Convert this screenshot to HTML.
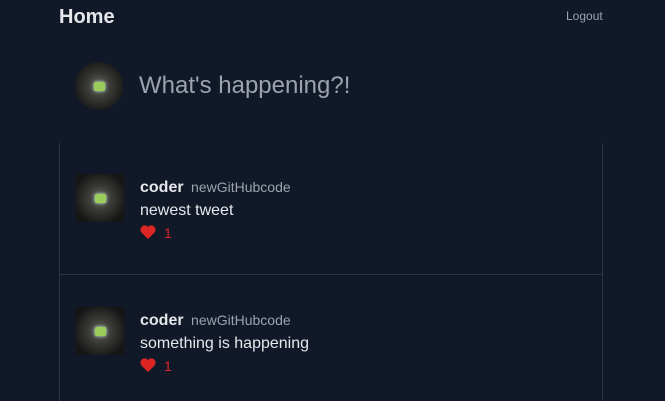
<!DOCTYPE html><html><head><style>
html,body{margin:0;height:401px;overflow:hidden}
body{background:#111827;font-family:"Liberation Sans",sans-serif;width:665px;position:relative}
.a{position:absolute}
.av{background:radial-gradient(circle at 50% 50%,#6b6b60 0,#3a3a36 35%,#151515 80%);}
.logo{position:absolute;left:19px;top:20px;width:11px;height:9px;background:#9ccc5a;border-radius:2px;box-shadow:0 0 3px #cfe;}
</style></head><body>
<div class="a" style="left:59px;top:6px;font-size:20px;font-weight:bold;color:#e5e7eb">Home</div>
<div class="a" style="left:566px;top:9px;font-size:12px;color:#9ca3af">Logout</div>
<div class="a av" style="left:75px;top:62px;width:48px;height:48px;border-radius:50%"><div class="logo"></div></div>
<div class="a" style="left:139px;top:72px;font-size:24px;color:#9ca3af">What's happening?!</div>
<div class="a" style="left:59px;top:143px;width:542px;height:270px;border-left:1px solid #2d3544;border-right:1px solid #2d3544"></div>
<div class="a" style="left:60px;top:274px;width:542px;height:1px;background:#2d3544"></div>
<div class="a av" style="left:76px;top:174px;width:48px;height:48px"><div class="logo"></div></div>
<div class="a" style="left:140px;top:179px;font-size:16px;color:#e5e7eb"><b>coder</b> <span style="font-size:14px;color:#9ca3af;margin-left:3px">newGitHubcode</span></div>
<div class="a" style="left:140px;top:202px;font-size:16px;color:#e5e7eb">newest tweet</div>
<svg class="a" style="left:140px;top:225px" width="16" height="14" viewBox="0 0 24 21"><path d="M12 21L2 11A6 6 0 0 1 12 3A6 6 0 0 1 22 11Z" fill="#dc2626"/></svg>
<div class="a" style="left:164px;top:225px;font-size:14px;color:#dc2626">1</div>
<div class="a av" style="left:76px;top:307px;width:48px;height:48px"><div class="logo"></div></div>
<div class="a" style="left:140px;top:312px;font-size:16px;color:#e5e7eb"><b>coder</b> <span style="font-size:14px;color:#9ca3af;margin-left:3px">newGitHubcode</span></div>
<div class="a" style="left:140px;top:335px;font-size:16px;color:#e5e7eb">something is happening</div>
<svg class="a" style="left:140px;top:358px" width="16" height="14" viewBox="0 0 24 21"><path d="M12 21L2 11A6 6 0 0 1 12 3A6 6 0 0 1 22 11Z" fill="#dc2626"/></svg>
<div class="a" style="left:164px;top:358px;font-size:14px;color:#dc2626">1</div>
</body></html>
